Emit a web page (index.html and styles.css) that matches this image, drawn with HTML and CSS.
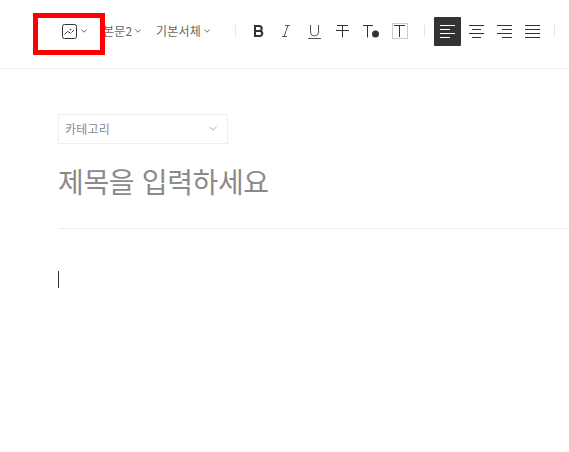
FILE: index.html
```html
<!DOCTYPE html>
<html lang="ko">
<head>
<meta charset="utf-8">
<title>글쓰기</title>
<link rel="stylesheet" href="styles.css">
</head>
<body>
<header class="toolbar">
  <div class="dropdown image-drop">
    <svg class="img-icon" width="15" height="16" viewBox="0 0 15 16"><rect x="0.5" y="1.500" width="14" height="14" rx="2" fill="none" stroke="#333"/><path d="M2.500 11.500 5.500 8.500l1.500 .8 1.500 1M9.500 9.500 12 7" fill="none" stroke="#333"/><circle cx="8.500" cy="6.500" r=".8" fill="#333"/></svg>
    <svg class="chev" width="6" height="4" viewBox="0 0 6 4"><path d="M.4 .6 3 3.200 5.600 .6" fill="none" stroke="#666"/></svg>
  </div>
  <div class="dropdown body-drop"><span>본문2</span><svg class="chev" width="6" height="4" viewBox="0 0 6 4"><path d="M.4 .6 3 3.200 5.600 .6" fill="none" stroke="#666"/></svg></div>
  <div class="dropdown font-drop"><span>기본서체</span><svg class="chev" width="6" height="4" viewBox="0 0 6 4"><path d="M.4 .6 3 3.200 5.600 .6" fill="none" stroke="#666"/></svg></div>
  <i class="divider first"></i>
  <div class="tools">
    <div class="tool"><svg width="16" height="16" viewBox="0 0 16 16"><path d="M4 3h4.200a2.500 2.500 0 0 1 0 5H4zM4 8h4.800a2.500 2.500 0 0 1 0 5H4z" fill="none" stroke="#333" stroke-width="2"/></svg></div>
    <div class="tool"><svg width="16" height="16" viewBox="0 0 16 16"><path d="M6 2.500h5M3 13.500h5M8.900 2.500 5.100 13.500" fill="none" stroke="#555"/></svg></div>
    <div class="tool"><svg width="16" height="16" viewBox="0 0 16 16"><path d="M3.500 2v7a4 4 0 0 0 8 0V2" fill="none" stroke="#555"/><path d="M1 15.500h13" stroke="#555"/></svg></div>
    <div class="tool"><svg width="16" height="16" viewBox="0 0 16 16"><path d="M2 2.500h11M7.500 2.500v12M1 7.500h13" fill="none" stroke="#333"/></svg></div>
    <div class="tool"><svg width="18" height="16" viewBox="0 0 18 16"><path d="M1 2.500h10M5.500 2.500v12" fill="none" stroke="#333"/><circle cx="13.500" cy="11" r="3.500" fill="#333"/></svg></div>
    <div class="tool"><svg width="18" height="18" viewBox="0 0 18 18"><rect x="2.500" y="1.500" width="15" height="15" fill="none" stroke="#ccc"/><path d="M4 3.500h11M9.500 3.500v11.500" fill="none" stroke="#333"/></svg></div>
  </div>
  <i class="divider second"></i>
  <div class="tools">
    <div class="tool active"><svg width="15" height="13" viewBox="0 0 15 13"><path d="M0 .5h15M0 4.500h10M0 8.500h15M0 12.500h10" stroke="#fff"/></svg></div>
    <div class="tool"><svg width="15" height="13" viewBox="0 0 15 13"><path d="M0 .5h15M3 4.500h9M0 8.500h15M3 12.500h9" stroke="#333"/></svg></div>
    <div class="tool"><svg width="15" height="13" viewBox="0 0 15 13"><path d="M0 .5h15M5 4.500h10M0 8.500h15M5 12.500h10" stroke="#333"/></svg></div>
    <div class="tool"><svg width="15" height="13" viewBox="0 0 15 13"><path d="M0 .5h15M0 4.500h15M0 8.500h15M0 12.500h15" stroke="#333"/></svg></div>
  </div>
  <i class="divider third"></i>
</header>
<main class="editor">
  <div class="category"><span>카테고리</span><svg width="8" height="5" viewBox="0 0 8 5"><path d="M.5 .8 4 4.200 7.500 .8" fill="none" stroke="#aaa"/></svg></div>
  <h1 class="title">제목을 입력하세요</h1>
  <div class="body-area"><i class="caret"></i></div>
</main>
<div class="highlight"></div>
</body>
</html>
```

FILE: styles.css
```css
* { box-sizing: border-box; }
html, body { margin: 0; padding: 0; height: 100%; overflow: hidden; background: #fff; }
body { font-family: "Noto Sans CJK KR", "Noto Sans", sans-serif; color: #333; position: relative; }

.toolbar {
  display: flex;
  align-items: center;
  height: 69px;
  padding: 0 0 6px 62px;
  border-bottom: 1px solid #eee;
}
.dropdown {
  display: flex;
  align-items: center;
  font-size: 12px;
  line-height: 16px;
  letter-spacing: 0.2px;
  color: #666;
}
.image-drop { gap: 4px; width: 41px; }
.body-drop { gap: 3px; width: 53px; }
.font-drop { gap: 3px; width: 79px; }
.divider { display: block; width: 1px; height: 12px; background: #e6e6e6; flex: none; }
.first { margin-right: 9px; }
.second { margin: 0 9px 0 11px; }
.third { margin-left: 8px; }
.tools { display: flex; }
.tool {
  width: 28px;
  height: 29px;
  display: flex;
  align-items: center;
  justify-content: center;
  flex: none;
}
.tool.active { width: 27px; margin-right: 1px; background: #333; border-radius: 1px; }

.editor { padding: 45px 0 0 58px; }
.category {
  display: flex;
  align-items: center;
  justify-content: space-between;
  width: 170px;
  height: 30px;
  padding: 0 10px 2px 6px;
  border: 1px solid #eee;
  font-size: 12px;
  letter-spacing: 0.2px;
  color: #888;
}
.title {
  margin: 17px 0 0;
  height: 68px;
  border-bottom: 1px solid #eee;
  font-size: 28px;
  line-height: 40px;
  font-weight: 400;
  letter-spacing: -0.35px;
  color: #8a8a8a;
}
.body-area { padding-top: 42px; }
.caret { display: block; width: 1px; height: 17px; background: #333; }

.highlight {
  position: absolute;
  left: 33px;
  top: 13px;
  width: 72px;
  height: 42px;
  border: 5px solid #f00;
}
```
